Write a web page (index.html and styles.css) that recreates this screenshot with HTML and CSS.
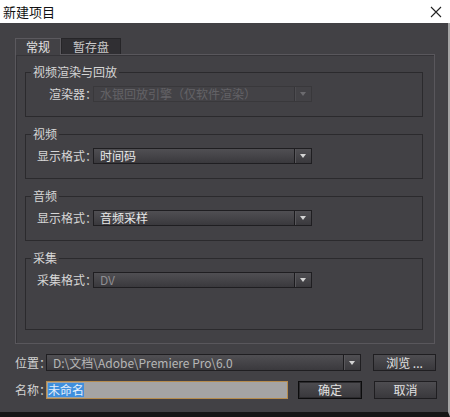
FILE: index.html
```html
<!DOCTYPE html>
<html lang="zh">
<head>
<meta charset="utf-8">
<title>新建项目</title>
<link rel="stylesheet" href="styles.css">
</head>
<body>
<div class="window">
  <div class="titlebar">
    <span class="title">新建项目</span>
    <svg class="close" viewBox="0 0 12 12" width="12" height="12"><path d="M1 1 L11 11 M11 1 L1 11" stroke="#222" stroke-width="1.1" fill="none"/></svg>
  </div>
  <div class="content">
    <div class="tabs">
      <div class="tab active">常规</div>
      <div class="tab">暂存盘</div>
    </div>
    <div class="panel">
      <fieldset class="group">
        <legend>视频渲染与回放</legend>
        <div class="row">
          <span class="label">渲染器：</span>
          <div class="combo disabled"><span class="value">水银回放引擎（仅软件渲染）</span><span class="drop"><i class="arrow"></i></span></div>
        </div>
      </fieldset>
      <fieldset class="group">
        <legend>视频</legend>
        <div class="row">
          <span class="label">显示格式：</span>
          <div class="combo"><span class="value">时间码</span><span class="drop"><i class="arrow"></i></span></div>
        </div>
      </fieldset>
      <fieldset class="group">
        <legend>音频</legend>
        <div class="row">
          <span class="label">显示格式：</span>
          <div class="combo"><span class="value">音频采样</span><span class="drop"><i class="arrow"></i></span></div>
        </div>
      </fieldset>
      <fieldset class="group tall">
        <legend>采集</legend>
        <div class="row">
          <span class="label">采集格式：</span>
          <div class="combo"><span class="value dim">DV</span><span class="drop"><i class="arrow"></i></span></div>
        </div>
      </fieldset>
    </div>
    <div class="field-row">
      <span class="flabel">位置：</span>
      <div class="combo path"><span class="value path-text">D:\文档\Adobe\Premiere Pro\6.0</span><span class="drop"><i class="arrow"></i></span></div>
      <div class="btn browse">浏览 ...</div>
    </div>
    <div class="field-row">
      <span class="flabel">名称：</span>
      <div class="name-input"><span class="sel">未命名</span></div>
      <div class="btn default">确定</div>
      <div class="btn cancel">取消</div>
    </div>
  </div>
</div>
</body>
</html>
```
FILE: styles.css
```css
html, body {
  margin: 0;
  padding: 0;
}
body {
  background: #161616;
  font-family: "Noto Sans CJK SC", "Noto Sans", "Liberation Sans", sans-serif;
  font-size: 12px;
}
.window {
  width: 450px;
  height: 417px;
  display: flex;
  flex-direction: column;
}
.titlebar {
  height: 23px;
  flex: none;
  background: #ffffff;
  display: flex;
  align-items: center;
  justify-content: space-between;
  padding: 0 8px 0 3px;
  box-sizing: border-box;
}
.title {
  font-size: 13px;
  color: #111;
  line-height: 16px;
}
.close {
  display: block;
}
.content {
  flex: 1;
  background: #424145;
  border-right: 2px solid #a6a6a6;
  border-bottom: 5px solid #161616;
  padding: 15px 13px 0 15px;
  display: flex;
  flex-direction: column;
}
.tabs {
  display: flex;
  height: 16px;
  flex: none;
}
.tab {
  padding: 0 11px;
  line-height: 15px;
  color: #c9c9c9;
  background: #302f33;
  border: 1px solid #262528;
  border-bottom: none;
}
.tab.active {
  padding: 0 10px;
  background: #424145;
  border-color: #5b595e;
  color: #e2e2e2;
  position: relative;
  z-index: 1;
  height: 16px;
}
.panel {
  border: 1px solid #59575c;
  box-shadow: inset 1px 1px 0 #353438;
  padding: 10px 11px 13px 9px;
  display: flex;
  flex-direction: column;
  gap: 10px;
}
.group {
  margin: 0;
  min-width: 0;
  border: 1px solid #2b2a2d;
  padding: 7px 10px 14px 11px;
}
.group.tall {
  padding-bottom: 41px;
}
.group legend {
  padding: 0 2px;
  margin-left: -6px;
  line-height: 14px;
  color: #d6d6d6;
}
.row {
  display: flex;
  align-items: center;
}
.label {
  flex: none;
  width: 54px;
  margin-right: 2px;
  text-align: right;
  white-space: nowrap;
  color: #d6d6d6;
  line-height: 16px;
  font-feature-settings: "halt";
}
.combo {
  flex: none;
  width: 219px;
  height: 16px;
  box-sizing: border-box;
  border: 1px solid #1f1e21;
  background: linear-gradient(#504f53, #3a393d);
  display: flex;
  align-items: center;
}
.value {
  flex: 1;
  min-width: 0;
  padding-left: 6px;
  line-height: 14px;
  color: #e8e8e8;
  white-space: nowrap;
}
.value.dim {
  color: #8e8d91;
}
.drop {
  flex: none;
  align-self: stretch;
  width: 16px;
  border-left: 1px solid #1c1b1e;
  box-shadow: inset 1px 0 0 #58575b;
  display: flex;
  align-items: center;
  justify-content: center;
}
.arrow {
  display: block;
  width: 0;
  height: 0;
  border-left: 3.5px solid transparent;
  border-right: 3.5px solid transparent;
  border-top: 4px solid #d4d4d4;
}
.combo.disabled {
  background: #434246;
  border-color: #39383b;
}
.combo.disabled .value {
  color: #636266;
}
.combo.disabled .drop {
  border-left-color: #363539;
  box-shadow: inset 1px 0 0 #4d4c50;
}
.combo.disabled .arrow {
  border-top-color: #6c6b6f;
}
.field-row {
  display: flex;
  align-items: center;
  margin-top: 10px;
}
.flabel {
  flex: none;
  width: 31px;
  white-space: nowrap;
  color: #d2d2d2;
  line-height: 16px;
  font-feature-settings: "halt";
}
.combo.path {
  width: 315px;
  height: 17px;
}
.path-text {
  color: #b6b6b6;
  line-height: 15px;
}
.btn {
  flex: none;
  width: 63px;
  height: 17px;
  box-sizing: border-box;
  border: 1px solid #1f1e21;
  background: linear-gradient(#4e4d51, #39383c);
  color: #e2e2e2;
  text-align: center;
  line-height: 15px;
  white-space: nowrap;
}
.browse {
  margin-left: 12px;
}
.name-input {
  flex: none;
  width: 242px;
  height: 18px;
  box-sizing: border-box;
  border: 1px solid #b58c4e;
  background: #a4a4a4;
  padding: 1px 0 0 1px;
}
.sel {
  display: inline-block;
  vertical-align: top;
  background: #3f8fdd;
  color: #e6f0fb;
  line-height: 14px;
}
.btn.default {
  margin-left: 10px;
  width: 64px;
  height: 18px;
  border-color: #0c0c0d;
  box-shadow: inset 0 0 0 1px #2c2b2e;
  line-height: 16px;
}
.btn.cancel {
  margin-left: 12px;
  height: 18px;
  line-height: 16px;
}
```
